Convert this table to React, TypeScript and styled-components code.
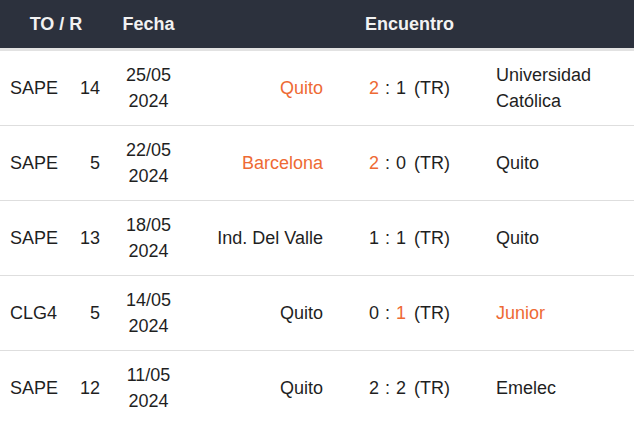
import React from 'react';
import styled, { createGlobalStyle } from 'styled-components';

const GlobalStyle = createGlobalStyle`
  html, body {
    margin: 0;
    padding: 0;
    background: #fff;
  }
  body {
    font-family: 'Liberation Sans', Arial, sans-serif;
    color: #1f1f1f;
  }
`;

const ORANGE = '#ee6a34';
const COLUMNS = '65px 47px 73px 150px 149px 150px';

interface Match {
  to: string;
  round: number;
  day: string;
  year: string;
  home: string;
  away: string;
  homeGoals: number;
  awayGoals: number;
}

const matches: Match[] = [
  { to: 'SAPE', round: 14, day: '25/05', year: '2024', home: 'Quito', away: 'Universidad Católica', homeGoals: 2, awayGoals: 1 },
  { to: 'SAPE', round: 5, day: '22/05', year: '2024', home: 'Barcelona', away: 'Quito', homeGoals: 2, awayGoals: 0 },
  { to: 'SAPE', round: 13, day: '18/05', year: '2024', home: 'Ind. Del Valle', away: 'Quito', homeGoals: 1, awayGoals: 1 },
  { to: 'CLG4', round: 5, day: '14/05', year: '2024', home: 'Quito', away: 'Junior', homeGoals: 0, awayGoals: 1 },
  { to: 'SAPE', round: 12, day: '11/05', year: '2024', home: 'Quito', away: 'Emelec', homeGoals: 2, awayGoals: 2 },
];

const Wrapper = styled.div`
  width: 634px;
  font-size: 18px;
  line-height: 26px;
`;

const Header = styled.div`
  display: grid;
  grid-template-columns: 112px 73px 1fr;
  height: 48px;
  align-items: center;
  background: #2c313d;
  border-bottom: 3px solid #e2e2e2;
`;

const HeadCell = styled.div`
  color: #f2f2f2;
  font-size: 18px;
  font-weight: 700;
  text-align: center;
`;

const Row = styled.div`
  display: grid;
  grid-template-columns: ${COLUMNS};
  align-items: center;
  height: 74px;
  border-bottom: 1px solid #dedede;

  &:last-child {
    border-bottom: none;
  }
`;

const Competition = styled.div`
  padding-left: 10px;
`;

const Round = styled.div`
  padding-right: 12px;
  text-align: right;
`;

const DateCell = styled.div`
  display: flex;
  flex-direction: column;
  align-items: center;
`;

const Team = styled.div<{ $side: 'home' | 'away'; $win?: boolean }>`
  padding: 0 12px;
  text-align: ${(p) => (p.$side === 'home' ? 'right' : 'left')};
  color: ${(p) => (p.$win ? ORANGE : '#1f1f1f')};
`;

const Score = styled.div`
  display: flex;
  justify-content: center;
  gap: 6px;
`;

const Goal = styled.span<{ $win?: boolean }>`
  color: ${(p) => (p.$win ? ORANGE : '#1f1f1f')};
`;

const Result = styled.span`
  margin-left: 2px;
`;

const App = () => {
  return (
    <>
      <GlobalStyle />
      <Wrapper>
        <Header>
          <HeadCell>TO / R</HeadCell>
          <HeadCell>Fecha</HeadCell>
          <HeadCell>Encuentro</HeadCell>
        </Header>
        {matches.map((m, i) => {
          const homeWin = m.homeGoals > m.awayGoals;
          const awayWin = m.awayGoals > m.homeGoals;
          return (
            <Row key={i}>
              <Competition>{m.to}</Competition>
              <Round>{m.round}</Round>
              <DateCell>
                <span>{m.day}</span>
                <span>{m.year}</span>
              </DateCell>
              <Team $side="home" $win={homeWin}>
                {m.home}
              </Team>
              <Score>
                <Goal $win={homeWin}>{m.homeGoals}</Goal>
                <span>:</span>
                <Goal $win={awayWin}>{m.awayGoals}</Goal>
                <Result>(TR)</Result>
              </Score>
              <Team $side="away" $win={awayWin}>
                {m.away}
              </Team>
            </Row>
          );
        })}
      </Wrapper>
    </>
  );
};

export default App;
